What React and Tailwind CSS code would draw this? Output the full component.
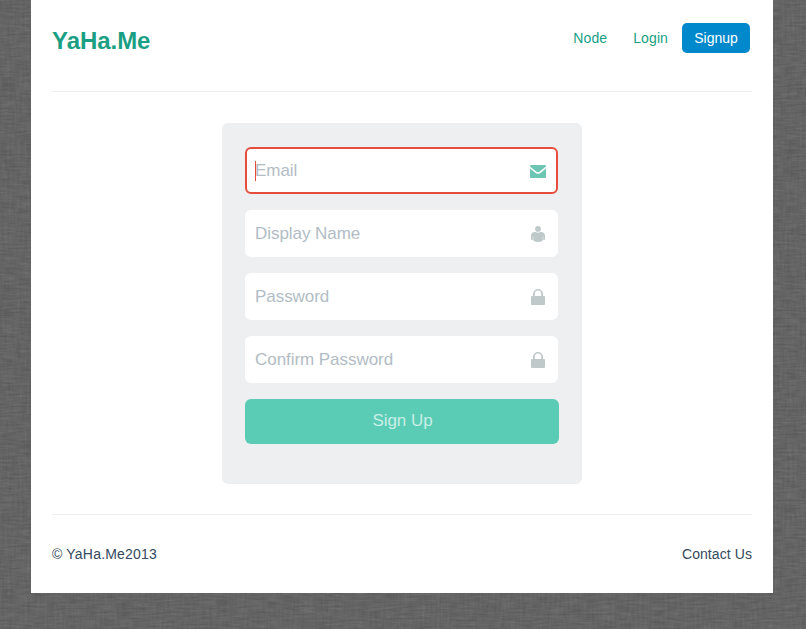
import React from "react";

// Woven fabric backdrop: two stretched noise layers over a flat grey.
function Linen() {
  return (
    <svg className="absolute inset-0 h-full w-full" aria-hidden="true">
      <filter id="weft" x="0" y="0" width="100%" height="100%" colorInterpolationFilters="sRGB">
        <feTurbulence type="fractalNoise" baseFrequency="0.06 0.5" numOctaves="3" seed="4" />
        <feColorMatrix values="0.15 0 0 0 0.317  0.15 0 0 0 0.317  0.15 0 0 0 0.317  0 0 0 0 1" />
      </filter>
      <filter id="warp" x="0" y="0" width="100%" height="100%" colorInterpolationFilters="sRGB">
        <feTurbulence type="fractalNoise" baseFrequency="0.4 0.05" numOctaves="3" seed="9" />
        <feColorMatrix values="0.15 0 0 0 0.317  0.15 0 0 0 0.317  0.15 0 0 0 0.317  0 0 0 0 0.35" />
      </filter>
      <rect width="100%" height="100%" filter="url(#weft)" />
      <rect width="100%" height="100%" filter="url(#warp)" />
    </svg>
  );
}

function MailIcon() {
  return (
    <svg width="16" height="16" viewBox="0 0 16 16" fill="#6dc5b4">
      <path d="M0 3Q0 2 1 2H15Q16 2 16 3V3.4L9.8 8.4Q8 9.8 6.2 8.4L0 3.4Z" />
      <path d="M0 5.4L5.6 9.9Q8 11.6 10.4 9.9L16 5.4V14Q16 15 15 15H1Q0 15 0 14Z" />
    </svg>
  );
}

function UserIcon() {
  return (
    <svg width="16" height="16" viewBox="0 0 16 16" fill="#bfc9ca">
      <circle cx="8" cy="2.9" r="2.9" />
      <path d="M4.3 6H5.4Q8 7.2 10.6 6H11.7Q15 6.5 15 9.7V13Q15 14 14 14H13.2V10.5H12.8V14.5Q11 16 8 16Q5 16 3.2 14.5V10.5H2.8V14H2Q1 14 1 13V9.7Q1 6.5 4.3 6Z" />
    </svg>
  );
}

function LockIcon() {
  return (
    <svg width="16" height="16" viewBox="0 0 16 16" fill="#bfc9ca">
      <path d="M1 8Q1 7 2 7H3V5A5 5 0 0 1 13 5V7H14Q15 7 15 8V15Q15 16 14 16H2Q1 16 1 15ZM4.8 7H11.2V5A3.2 3.4 0 0 0 4.8 5Z" />
    </svg>
  );
}

function Field({ label, icon, active }) {
  return (
    <div
      className={
        "flex h-[47px] w-[313px] items-center justify-between rounded-md border-2 bg-white pr-2.5 pl-2 " +
        (active ? "border-[#e74c3c]" : "border-white")
      }
    >
      <div className="relative text-[17px] leading-5 tracking-[-0.05px] text-[#b2bcc5]">
        {active && <span className="absolute top-0 left-0 h-5 w-px bg-[#e74c3c]" />}
        {label}
      </div>
      <div className="flex h-4 items-center">{icon}</div>
    </div>
  );
}

export default function App() {
  return (
    <div className="relative h-[629px] w-[806px] overflow-hidden bg-[#646464] font-['Liberation_Sans',Arial,sans-serif] text-sm">
      <Linen />
      <div className="relative ml-[31px] h-[593px] w-[742px] bg-white px-[21px]">
        <header className="flex h-[92px] justify-between border-b border-[#eeeeee] pt-[23px]">
          <h1 className="pt-px text-2xl leading-[34px] font-bold tracking-[-0.05px] text-[#1b9f84]">YaHa.Me</h1>
          <nav className="flex h-[30px] items-center pr-0.5 text-[#16a085]">
            <a className="mr-[26px] tracking-[0.1px]">Node</a>
            <a className="mr-[14px] tracking-[0.1px]">Login</a>
            <a className="flex h-[30px] w-[68px] items-center justify-center rounded-[5px] bg-[#0088cc] text-white">
              Signup
            </a>
          </nav>
        </header>
        <main className="flex h-[422px] justify-center pt-[31px]">
          <form className="flex h-[361px] w-[360px] flex-col gap-4 rounded-md bg-[#edeff1] pt-6 pl-[23px]">
            <Field label="Email" icon={<MailIcon />} active />
            <Field label="Display Name" icon={<UserIcon />} />
            <Field label="Password" icon={<LockIcon />} />
            <Field label="Confirm Password" icon={<LockIcon />} />
            <button
              type="button"
              className="h-[45px] w-[314px] rounded-md bg-[#5accb5] pb-0.5 pl-px text-[17px] leading-5 tracking-[-0.05px] text-[#c8eee6]"
            >
              Sign Up
            </button>
          </form>
        </main>
        <footer className="flex justify-between border-t border-[#eeeeee] pt-[29px] leading-5 text-[#34495e]">
          <span className="tracking-[0.2px]">© YaHa.Me2013</span>
          <a className="tracking-[0.08px]">Contact Us</a>
        </footer>
      </div>
    </div>
  );
}
